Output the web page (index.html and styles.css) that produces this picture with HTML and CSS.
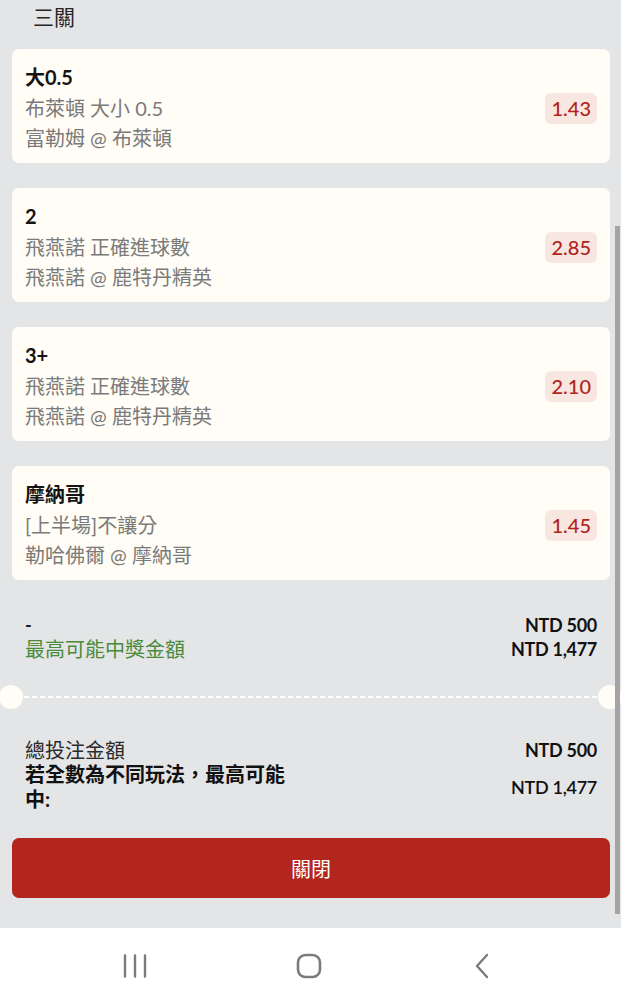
FILE: index.html
```html
<!DOCTYPE html>
<html lang="zh-Hant">
<head>
<meta charset="utf-8">
<link rel="stylesheet" href="styles.css">
</head>
<body>
<div class="screen">
  <div class="sheet">
    <div class="sheet-title">三關</div>
    <div class="cards">
      <div class="card">
        <div class="card-info">
          <div class="card-pick">大0.5</div>
          <div class="card-line">布萊頓 大小 0.5</div>
          <div class="card-line">富勒姆 @ 布萊頓</div>
        </div>
        <div class="odds">1.43</div>
      </div>
      <div class="card">
        <div class="card-info">
          <div class="card-pick">2</div>
          <div class="card-line">飛燕諾 正確進球數</div>
          <div class="card-line">飛燕諾 @ 鹿特丹精英</div>
        </div>
        <div class="odds">2.85</div>
      </div>
      <div class="card">
        <div class="card-info">
          <div class="card-pick">3+</div>
          <div class="card-line">飛燕諾 正確進球數</div>
          <div class="card-line">飛燕諾 @ 鹿特丹精英</div>
        </div>
        <div class="odds">2.10</div>
      </div>
      <div class="card">
        <div class="card-info">
          <div class="card-pick">摩納哥</div>
          <div class="card-line">[上半場]不讓分</div>
          <div class="card-line">勒哈佛爾 @ 摩納哥</div>
        </div>
        <div class="odds">1.45</div>
      </div>
    </div>

    <div class="summary">
      <div class="row">
        <span class="dash">-</span>
        <span class="amount">NTD 500</span>
      </div>
      <div class="row">
        <span class="win-label">最高可能中獎金額</span>
        <span class="amount">NTD 1,477</span>
      </div>
    </div>

    <div class="ticket-divider"></div>

    <div class="totals">
      <div class="row">
        <span class="total-label">總投注金額</span>
        <span class="amount">NTD 500</span>
      </div>
      <div class="row row-center">
        <span class="max-label">若全數為不同玩法，最高可能中:</span>
        <span class="amount amount-regular">NTD 1,477</span>
      </div>
    </div>

    <button class="close-btn">關閉</button>
  </div>

  <nav class="navbar">
    <svg class="nav-recent" width="24" height="24" viewBox="0 0 24 24"><path d="M2 1.5v21M12 1.5v21M22 1.5v21" stroke="#7b7b7b" stroke-width="2.4" fill="none" stroke-linecap="round"/></svg>
    <svg class="nav-home" width="26" height="26" viewBox="0 0 26 26"><rect x="2" y="2" width="22" height="22" rx="7.5" stroke="#7b7b7b" stroke-width="2.6" fill="none"/></svg>
    <svg class="nav-back" width="16" height="26" viewBox="0 0 16 26"><path d="M13 2L3 13l10 11" stroke="#7b7b7b" stroke-width="2.4" fill="none" stroke-linecap="round" stroke-linejoin="round"/></svg>
  </nav>

  <div class="scroll-thumb"></div>
</div>
</body>
</html>
```
FILE: styles.css
```css
* { box-sizing: border-box; }

html, body {
  margin: 0;
  padding: 0;
}

body {
  font-family: Lato, "Noto Sans CJK TC", "Noto Sans", sans-serif;
  background: #ffffff;
  color: #1c1c1c;
}

.screen {
  position: relative;
  width: 621px;
  height: 1000px;
  overflow: hidden;
  display: flex;
  flex-direction: column;
}

.sheet {
  background: #e4e5e7;
  padding: 0 11px 30px 12px;
  display: flex;
  flex-direction: column;
}

.sheet-title {
  font-size: 21px;
  line-height: 34px;
  height: 49px;
  padding-left: 21px;
  color: #262626;
}

.cards {
  display: flex;
  flex-direction: column;
  gap: 25px;
}

.card {
  background: #fffdf5;
  border-radius: 7px;
  padding: 12px 13px 10px 13px;
  display: flex;
  align-items: center;
  justify-content: space-between;
  height: 114px;
}

.card-info {
  display: flex;
  flex-direction: column;
}

.card-pick {
  font-size: 20px;
  font-weight: 700;
  line-height: 32px;
  color: #141414;
}

.card-line {
  font-size: 20px;
  line-height: 30px;
  color: #7a7a7a;
}

.odds {
  background: #f8e7e1;
  color: #b0241c;
  font-size: 20px;
  font-weight: 500;
  line-height: 31px;
  padding: 0 6px;
  border-radius: 6px;
  margin-top: 2px;
}

.summary {
  margin-top: 33px;
  padding: 0 13px;
  display: flex;
  flex-direction: column;
}

.row {
  display: flex;
  justify-content: space-between;
  align-items: flex-start;
  line-height: 24px;
}

.row-center {
  align-items: center;
}

.dash {
  font-size: 18px;
  font-weight: 700;
}

.amount {
  font-size: 18px;
  font-weight: 700;
  color: #111;
  letter-spacing: -0.3px;
}

.amount-regular {
  font-weight: 600;
}

.win-label {
  font-size: 20px;
  color: #4a8a3a;
}

.ticket-divider {
  position: relative;
  height: 24px;
  margin: 24px -11px 0 -12px;
  background-image: linear-gradient(to right, #ffffff 0 5px, transparent 5px 8px);
  background-size: 8px 2px;
  background-repeat: repeat-x;
  background-position: 24px 11px;
  background-clip: content-box;
  padding: 0 22px 0 22px;
}

.ticket-divider::before,
.ticket-divider::after {
  content: "";
  position: absolute;
  top: 0;
  width: 24px;
  height: 24px;
  border-radius: 50%;
  background: #fffdf5;
}

.ticket-divider::before { left: -1px; }
.ticket-divider::after { right: -1px; }

.totals {
  margin-top: 29px;
  padding: 0 13px;
  display: flex;
  flex-direction: column;
}

.total-label {
  font-size: 20px;
  color: #2a2a2a;
}

.max-label {
  font-size: 20px;
  font-weight: 700;
  line-height: 25px;
  width: 275px;
  color: #111;
}

.close-btn {
  margin-top: 26px;
  height: 60px;
  border: none;
  border-radius: 7px;
  background: #b3261e;
  color: #ffffff;
  font-family: Lato, "Noto Sans CJK TC", sans-serif;
  font-size: 20px;
}

.navbar {
  flex: 1;
  background: #ffffff;
  display: flex;
  align-items: center;
  padding: 4px 0 0 123px;
}

.nav-home { margin-left: 149px; }
.nav-back { margin-left: 152px; }

.scroll-thumb {
  position: absolute;
  right: 1px;
  top: 226px;
  width: 5px;
  height: 688px;
  background: #a4a4a4;
}
```
